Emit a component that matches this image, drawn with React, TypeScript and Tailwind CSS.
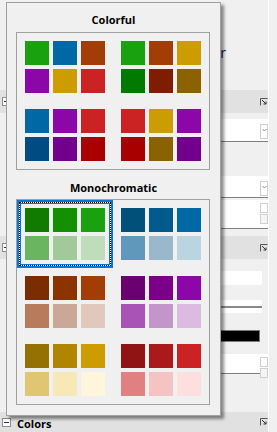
import type { ReactNode } from "react";

type Group = { top: string[]; bottom: string[] };

const colorful: Group[] = [
  { top: ["#1aa10f", "#0069a5", "#a23d05"], bottom: ["#8c07a8", "#cc9c00", "#cb2323"] },
  { top: ["#1aa10f", "#a23d05", "#cc9c00"], bottom: ["#007a00", "#7f1d00", "#8b6200"] },
  { top: ["#0069a5", "#8c07a8", "#cb2323"], bottom: ["#004c82", "#72008c", "#a80000"] },
  { top: ["#cb2323", "#cc9c00", "#8c07a8"], bottom: ["#a80000", "#8b6200", "#72008c"] }
];

const monochromatic: Group[] = [
  { top: ["#117a00", "#148f00", "#1aa10f"], bottom: ["#6ab55f", "#a1c999", "#c0ddbb"] },
  { top: ["#00507a", "#005a8b", "#0069a5"], bottom: ["#5f98ba", "#99b8cb", "#bbd5e0"] },
  { top: ["#7a2e00", "#8b3400", "#a23d05"], bottom: ["#b87c5c", "#c9a898", "#e0c8bd"] },
  { top: ["#6b0070", "#7b0087", "#8c07a8"], bottom: ["#a853b5", "#c296c9", "#dcbbe0"] },
  { top: ["#947100", "#b08600", "#cc9c00"], bottom: ["#e0c673", "#f7e8b8", "#fff5dc"] },
  { top: ["#911414", "#ab1a1a", "#cb2323"], bottom: ["#e08080", "#f6c3c3", "#ffdede"] }
];

const font = { fontFamily: '"Open Sans", "DejaVu Sans", sans-serif' };

function Swatches({ group }: { group: Group }) {
  return (
    <div className="grid grid-cols-[24px_24px_24px] gap-1">
      {[...group.top, ...group.bottom].map((color, index) => (
        <div key={index} className="h-6 w-6" style={{ backgroundColor: color }} />
      ))}
    </div>
  );
}

function Cell({ group, selected }: { group: Group; selected?: boolean }) {
  if (selected) {
    return (
      <div className="box-border flex h-[68px] w-[96px] border-2 border-[#0078d7]">
        <div className="flex flex-1 border border-dotted border-black bg-white">
          <div className="flex flex-1 items-center justify-center border border-[#0078d7] bg-[#f0f0f0]">
            <Swatches group={group} />
          </div>
        </div>
      </div>
    );
  }
  return (
    <div className="flex h-[68px] w-[96px] items-center justify-center">
      <Swatches group={group} />
    </div>
  );
}

function GroupBox({ groups, selectedIndex }: { groups: Group[]; selectedIndex?: number }) {
  return (
    <div className="ml-[9px] grid w-[194px] grid-cols-2 border border-[#a0a0a0]">
      {groups.map((group, index) => (
        <Cell key={index} group={group} selected={index === selectedIndex} />
      ))}
    </div>
  );
}

function MinusBox() {
  return (
    <div className="flex h-[9px] w-[9px] items-center justify-center border border-[#8c8c8c] bg-white">
      <div className="h-px w-[5px] bg-[#1e2f6b]" />
    </div>
  );
}

function LauncherIcon() {
  return (
    <svg width="8" height="8" viewBox="0 0 8 8" className="shrink-0">
      <path d="M0.5 7.5V0.5H7.5" fill="none" stroke="#555" />
      <path d="M2 2L6 6M6 3.5V6H3.5" fill="none" stroke="#333" />
    </svg>
  );
}

function Band({ h, children }: { h: string; children?: ReactNode }) {
  return (
    <div className={`flex ${h} items-center bg-[#e1e1e1] pl-[2px]`}>
      <MinusBox />
      <div className="flex-1">{children}</div>
      <LauncherIcon />
    </div>
  );
}

function DropButton() {
  return (
    <div className="mt-[5px] flex h-[15px] w-[8px] items-start justify-center self-start border border-[#cfcfcf] bg-white pt-[3px]">
      <svg width="5" height="4" viewBox="0 0 5 4">
        <path d="M0.5 1L2.5 3L4.5 1" fill="none" stroke="#8a8a8a" />
      </svg>
    </div>
  );
}

function SpinButtons() {
  return (
    <div className="mt-[3px] flex w-[8px] flex-col gap-px self-start">
      <div className="h-[10px] border border-[#cfcfcf] bg-white" />
      <div className="h-[10px] border border-[#cfcfcf] bg-[#f4f4f4]" />
    </div>
  );
}

function Background() {
  return (
    <div className="flex h-[432px] w-[277px] bg-[#f0f0f0]">
      <div className="flex w-[268px] flex-col overflow-hidden" style={font}>
        <div className="h-[90px]">
          <div className="w-[226px] pt-[45px] text-right text-[14px] leading-[16px] text-[#101050]">Color</div>
        </div>
        <Band h="h-[23px]" />
        <div className="h-[6px]" />
        <div className="ml-[100px] flex h-[23px] justify-end border-b border-[#808080] bg-white">
          <DropButton />
        </div>
        <div className="h-[34px]" />
        <div className="ml-[100px] flex h-[22px] justify-end border-b border-[#808080] bg-white">
          <DropButton />
        </div>
        <div className="h-[2px]" />
        <div className="ml-[100px] flex h-[29px] justify-end border-b border-[#808080] bg-white">
          <SpinButtons />
        </div>
        <div className="h-[7px]" />
        <Band h="h-[23px]" />
        <div className="h-[12px]" />
        <div className="ml-[100px] h-[14px] w-[162px] bg-white" />
        <div className="h-[15px]" />
        <div className="ml-[100px] flex h-[13px] w-[162px] items-center bg-white">
          <div className="h-[2px] w-full bg-[#8a8a8a]" />
        </div>
        <div className="h-[17px]" />
        <div className="ml-[100px] h-[12px] w-[160px] border border-[#7a7a7a] bg-black" />
        <div className="h-[12px]" />
        <div className="ml-[100px] flex h-[20px] justify-end border-b border-[#808080] bg-white">
          <SpinButtons />
        </div>
        <div className="h-[38px]" />
        <Band h="h-[20px]">
          <span className="pl-[6px] text-[11px] font-bold leading-[14px] text-black">Colors</span>
        </Band>
      </div>
      <div className="w-px bg-white" />
      <div className="flex-1 bg-[#f0f0f0]" />
    </div>
  );
}

function ColorPopup() {
  return (
    <div
      className="absolute left-[6px] top-[2px] box-border flex h-[414px] w-[215px] flex-col border border-[#a0a0a0] bg-[#f0f0f0] shadow-[3px_3px_3px_rgba(0,0,0,0.45)]"
      style={font}
    >
      <div className="h-[29px] pt-[10px] text-center text-[11px] font-bold leading-[14px] text-black">Colorful</div>
      <GroupBox groups={colorful} />
      <div className="h-[29px] pt-[11px] text-center text-[11px] font-bold leading-[14px] text-black">Monochromatic</div>
      <GroupBox groups={monochromatic} selectedIndex={0} />
    </div>
  );
}

export default function App() {
  return (
    <div className="relative h-[432px] w-[277px] overflow-hidden">
      <Background />
      <ColorPopup />
    </div>
  );
}
